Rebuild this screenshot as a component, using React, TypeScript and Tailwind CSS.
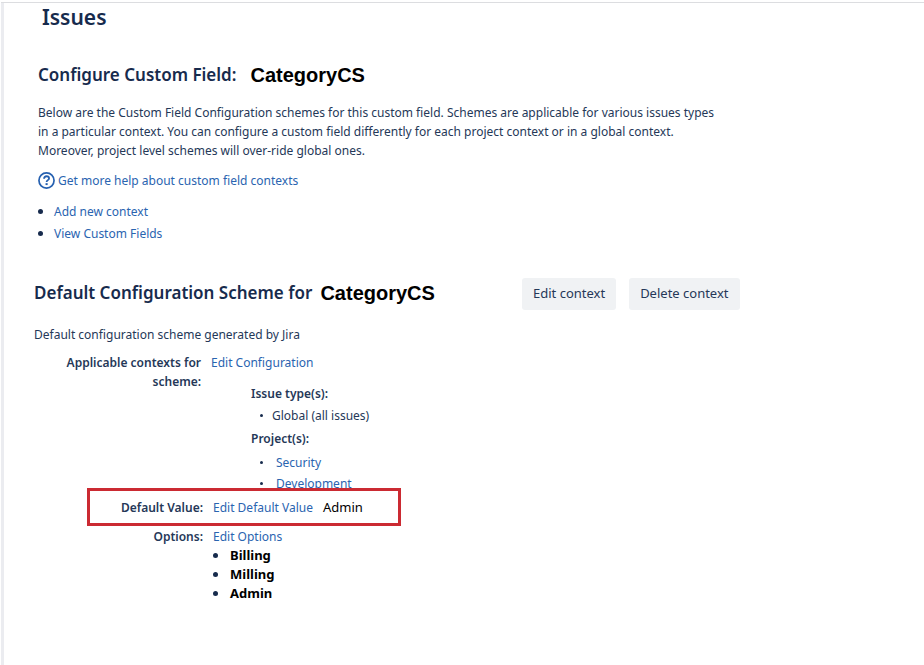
import type { ReactNode } from 'react'

const HELP_LINKS = ['Add new context', 'View Custom Fields']
const PROJECTS = ['Security', 'Development']
const OPTIONS = ['Billing', 'Milling', 'Admin']

function Link({ children }: { children: ReactNode }) {
  return (
    <a href="#" className="text-[#2a64b0] hover:underline">
      {children}
    </a>
  )
}

function FieldName() {
  return <span className="font-['Liberation_Sans',sans-serif] text-xl leading-7 font-bold text-black">CategoryCS</span>
}

function Dot({ small = false }: { small?: boolean }) {
  return <span aria-hidden="true" className={`shrink-0 rounded-full bg-[#172b4d] ${small ? 'size-[3px]' : 'size-[5px]'}`} />
}

function HelpIcon() {
  return (
    <svg viewBox="0 0 16 16" className="size-[17px] shrink-0" fill="none" stroke="#2560b0" aria-hidden="true">
      <circle cx="8" cy="8" r="7.1" strokeWidth="1.6" />
      <path d="M5.7 6.3c0-1.4 1-2.3 2.3-2.3s2.4.8 2.4 2c0 1.6-2.3 1.7-2.3 3.3" strokeWidth="1.7" />
      <path d="M7.1 11.4h2" strokeWidth="1.8" />
    </svg>
  )
}

export default function App() {
  return (
    <div className="flex min-h-screen flex-col bg-white pt-[2px] font-['Noto_Sans','Open_Sans',sans-serif] text-xs leading-[19px] text-[#253858]">
      <div className="ml-px flex flex-1 border-t border-[#dcdde0]">
        <div className="w-[3px] shrink-0 bg-[#ebecf0]" />
        <main className="min-w-0 flex-1 pr-6 pb-6 pl-[30px]">
          <h1 className="pl-2 text-[21px] leading-7 font-semibold text-[#172b4d]">Issues</h1>

          <section className="mt-[29px] pl-1">
            <h2 className="flex items-center gap-[14px] text-[17px] leading-[29px] font-semibold text-[#172b4d]">
              Configure Custom Field: <FieldName />
            </h2>
            <p className="mt-[14px] max-w-[688px]">
              Below are the Custom Field Configuration schemes for this custom field. Schemes are applicable for various issues types
              in a particular context. You can configure a custom field differently for each project context or in a global context.
              Moreover, project level schemes will over-ride global ones.
            </p>
            <p className="mt-[10px] flex items-center gap-[3px] leading-[21px]">
              <HelpIcon />
              <Link>Get more help about custom field contexts</Link>
            </p>
            <ul className="mt-[10px] space-y-px leading-[21px]">
              {HELP_LINKS.map((label) => (
                <li key={label} className="flex items-center gap-[11px]">
                  <Dot />
                  <Link>{label}</Link>
                </li>
              ))}
            </ul>
          </section>

          <section className="mt-[34px]">
            <div className="flex items-start">
              <h2 className="flex w-[488px] items-center gap-2 text-[17px] leading-[29px] font-semibold text-[#172b4d]">
                Default Configuration Scheme for <FieldName />
              </h2>
              <div className="flex gap-[13px] text-[13px]">
                <button type="button" className="h-8 rounded-[3px] bg-[#f0f2f4] px-[11px] pb-[2px]">
                  Edit context
                </button>
                <button type="button" className="h-8 rounded-[3px] bg-[#f0f2f4] px-[11px] pb-[2px]">
                  Delete context
                </button>
              </div>
            </div>
            <p className="mt-[15px]">Default configuration scheme generated by Jira</p>

            <dl className="mt-[9px]">
              <div className="flex gap-[10px]">
                <dt className="w-[167px] pl-5 text-right font-semibold">Applicable contexts for scheme:</dt>
                <dd>
                  <Link>Edit Configuration</Link>
                  <div className="mt-[11px] pl-10 leading-[21px]">
                    <h3 className="font-semibold">Issue type(s):</h3>
                    <ul className="mt-px pl-[9px]">
                      <li className="flex items-center gap-[9px]">
                        <Dot small />
                        Global (all issues)
                      </li>
                    </ul>
                    <h3 className="mt-[2px] font-semibold">Project(s):</h3>
                    <ul className="mt-[3px] pl-[9px]">
                      {PROJECTS.map((name) => (
                        <li key={name} className="flex items-center gap-[13px]">
                          <Dot small />
                          <Link>{name}</Link>
                        </li>
                      ))}
                    </ul>
                  </div>
                </dd>
              </div>

              {/* highlighted row sits over the tail of the project list */}
              <div className="relative -mt-[6px] ml-[53px] flex h-[38px] w-[314px] items-center gap-[10px] border-3 border-[#cb2a32] bg-white">
                <dt className="w-[113px] text-right font-semibold">Default Value:</dt>
                <dd className="flex gap-[10px]">
                  <Link>Edit Default Value</Link>
                  <span className="text-[13px] text-black">Admin</span>
                </dd>
              </div>

              <div className="mt-px flex gap-[10px]">
                <dt className="w-[169px] text-right font-semibold">Options:</dt>
                <dd>
                  <Link>Edit Options</Link>
                  <ul className="text-[13px] font-bold text-black">
                    {OPTIONS.map((name) => (
                      <li key={name} className="flex items-center gap-3">
                        <Dot />
                        {name}
                      </li>
                    ))}
                  </ul>
                </dd>
              </div>
            </dl>
          </section>
        </main>
      </div>
    </div>
  )
}
